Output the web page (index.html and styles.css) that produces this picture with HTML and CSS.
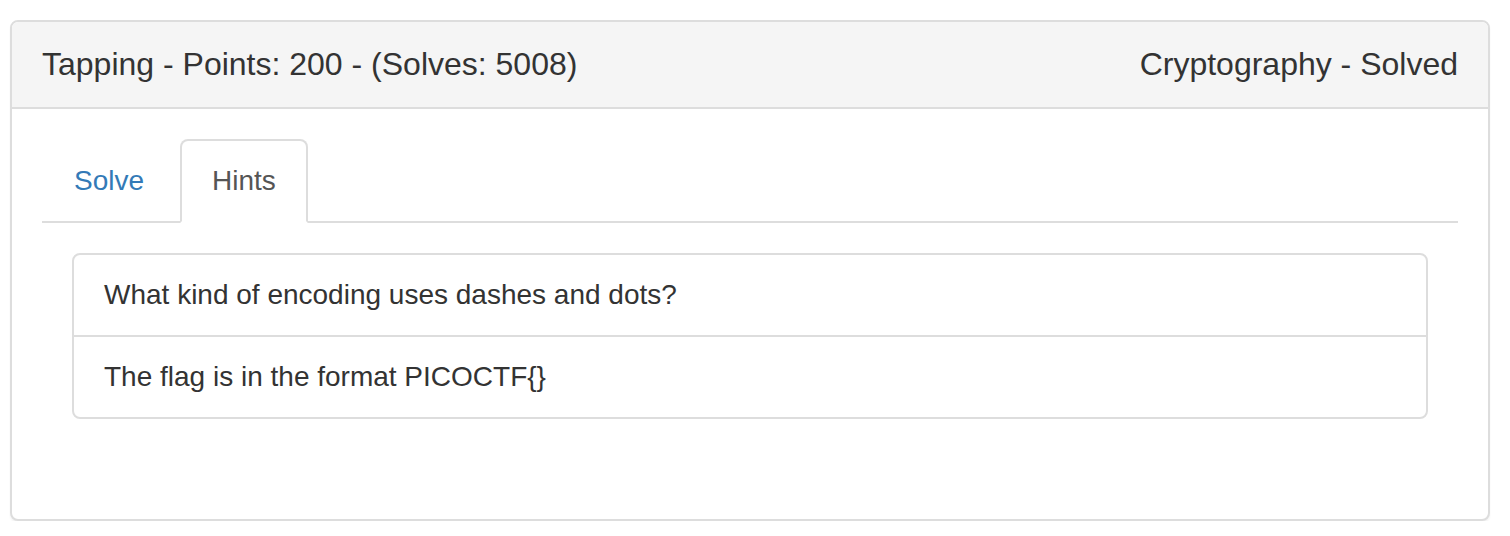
FILE: index.html
```html
<!DOCTYPE html>
<html lang="en">
<head>
<meta charset="utf-8">
<title>Tapping</title>
<link rel="stylesheet" href="styles.css">
</head>
<body>
<div class="page">
  <div class="panel">
    <div class="panel-heading">
      <h3 class="panel-title">Tapping - Points: 200 - (Solves: 5008)</h3>
      <span class="panel-meta">Cryptography - Solved</span>
    </div>
    <div class="panel-body">
      <ul class="nav-tabs">
        <li class="tab"><a class="tab-link">Solve</a></li>
        <li class="tab active"><a class="tab-link">Hints</a></li>
      </ul>
      <div class="tab-content">
        <ul class="list-group">
          <li class="list-item">What kind of encoding uses dashes and dots?</li>
          <li class="list-item">The flag is in the format PICOCTF{}</li>
        </ul>
      </div>
    </div>
  </div>
</div>
</body>
</html>
```

FILE: styles.css
```css
* { box-sizing: border-box; }
html, body {
  margin: 0;
  padding: 0;
  background: #fff;
}
body {
  font-family: "Liberation Sans", Arial, Helvetica, sans-serif;
  font-size: 28px;
  line-height: 40px;
  color: #333;
}
.page {
  padding: 20px 20px 0 10px;
}
.panel {
  border: 2px solid #ddd;
  border-radius: 8px;
  background: #fff;
  box-shadow: 0 2px 2px rgba(0,0,0,0.05);
}
.panel-heading {
  display: flex;
  justify-content: space-between;
  align-items: center;
  padding: 20px 30px;
  background: #f5f5f5;
  border-bottom: 2px solid #ddd;
  border-radius: 6px 6px 0 0;
}
.panel-title {
  margin: 0;
  font-size: 32px;
  font-weight: normal;
  line-height: 45px;
  color: #333;
}
.panel-meta {
  font-size: 32px;
  line-height: 45px;
  color: #333;
}
.panel-body {
  padding: 30px;
}
.nav-tabs {
  list-style: none;
  margin: 0;
  padding: 0;
  display: flex;
  border-bottom: 2px solid #ddd;
}
.tab {
  margin-bottom: -2px;
  margin-right: 4px;
}
.tab-link {
  display: block;
  padding: 20px 30px;
  line-height: 40px;
  border: 2px solid transparent;
  border-radius: 8px 8px 0 0;
  color: #337ab7;
  text-decoration: none;
}
.tab.active .tab-link {
  color: #555;
  background: #fff;
  border-color: #ddd #ddd transparent #ddd;
}
.tab-content {
  padding: 30px;
}
.list-group {
  list-style: none;
  margin: 0 0 40px 0;
  padding: 0;
  border: 2px solid #ddd;
  border-radius: 8px;
}
.list-item {
  padding: 20px 30px;
  line-height: 40px;
}
.list-item + .list-item {
  border-top: 2px solid #ddd;
}
```
